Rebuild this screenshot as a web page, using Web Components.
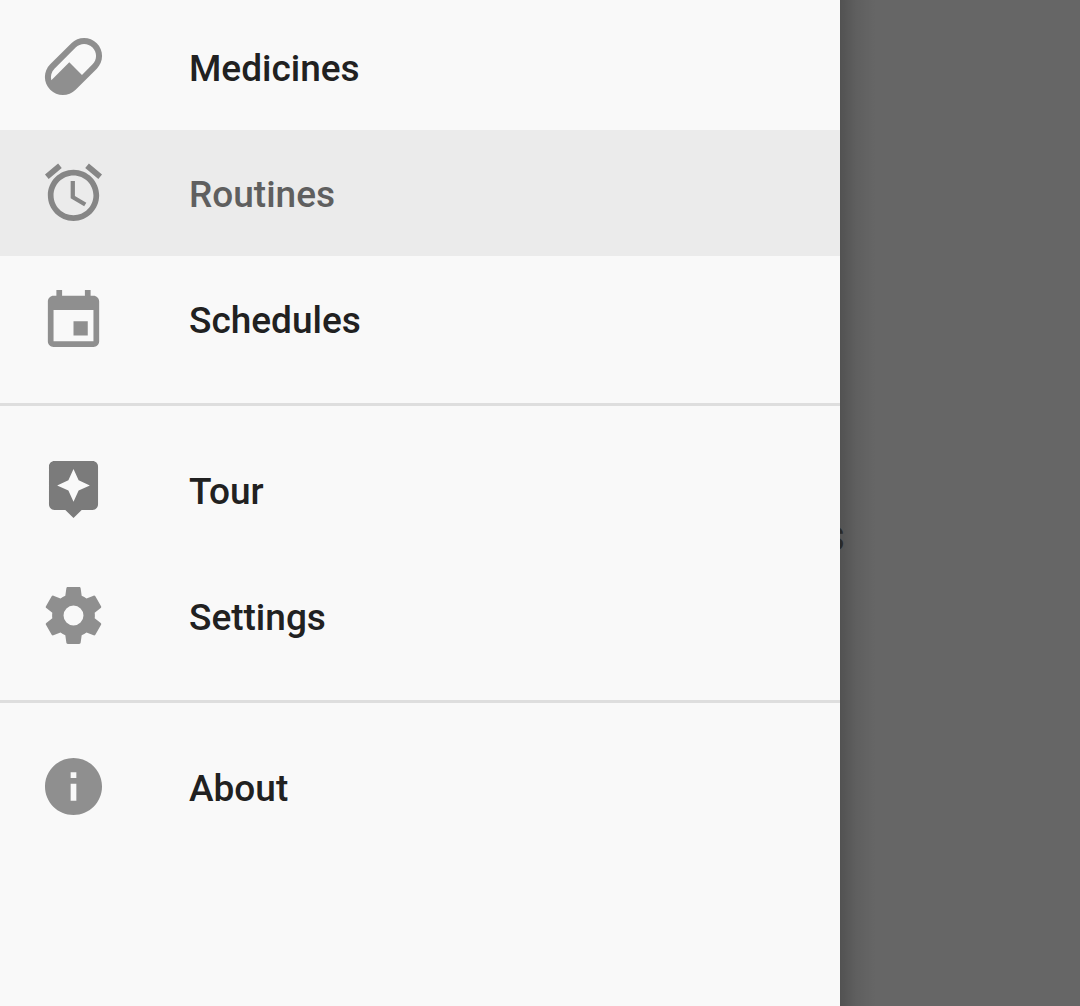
<!DOCTYPE html>
<html lang="en">
<head>
<meta charset="utf-8">
<meta name="viewport" content="width=device-width, initial-scale=1">
<title>Navigation drawer</title>
<style>
html, body { margin: 0; height: 100%; }
body { font-family: Roboto, "Liberation Sans", sans-serif; background: #666; overflow: hidden; }
</style>
</head>
<body>
<app-shell>
  <nav-drawer slot="drawer">
    <nav-group>
      <nav-item icon="pill">Medicines</nav-item>
      <nav-item icon="alarm" selected>Routines</nav-item>
      <nav-item icon="event">Schedules</nav-item>
    </nav-group>
    <nav-group>
      <nav-item icon="assistant">Tour</nav-item>
      <nav-item icon="settings">Settings</nav-item>
    </nav-group>
    <nav-group>
      <nav-item icon="info">About</nav-item>
    </nav-group>
  </nav-drawer>
  <span>s</span>
</app-shell>
<script>
const define = (name, html, setup) => customElements.define(name, class extends HTMLElement {
  constructor() {
    super();
    this.attachShadow({ mode: 'open' }).innerHTML = html;
  }
  connectedCallback() { if (setup) setup(this); }
});

const ICONS = {
  pill: '<path transform="translate(-.6 -.6) scale(1.05)" d="M4.22,11.29L11.29,4.22C13.64,1.88 17.43,1.88 19.78,4.22C22.12,6.56 22.12,10.36 19.78,12.71L12.71,19.78C10.36,22.12 6.56,22.12 4.22,19.78C1.88,17.43 1.88,13.64 4.22,11.29M5.64,12.71C4.59,13.75 4.24,15.24 4.6,16.57L10.59,10.59L14.83,14.83L18.36,11.29C19.93,9.73 19.93,7.2 18.36,5.64C16.8,4.07 14.27,4.07 12.71,5.64L5.64,12.71Z"/>',
  alarm: '<path d="M22 5.72l-4.6-3.86-1.29 1.53 4.6 3.86L22 5.72zM7.88 3.39L6.6 1.86 2 5.71l1.29 1.53 4.59-3.85zM12.5 8H11v6l4.75 2.85.75-1.23-4-2.37V8zM12 4c-4.97 0-9 4.03-9 9s4.02 9 9 9c4.97 0 9-4.03 9-9s-4.03-9-9-9zm0 16c-3.87 0-7-3.13-7-7s3.13-7 7-7 7 3.13 7 7-3.13 7-7 7z"/>',
  event: '<path transform="translate(0 1)" d="M17 12h-5v5h5v-5zM16 1v2H8V1H6v2H5c-1.11 0-1.99.9-1.99 2L3 19c0 1.1.89 2 2 2h14c1.1 0 2-.9 2-2V5c0-1.1-.9-2-2-2h-1V1h-2zm3 18H5V8h14v11z"/>',
  assistant: '<path transform="translate(.53 .05) scale(.956)" d="M19 2H5c-1.11 0-2 .9-2 2v14c0 1.1.89 2 2 2h4l3 3 3-3h4c1.1 0 2-.9 2-2V4c0-1.1-.9-2-2-2zm-5.12 10.88L12 17l-1.88-4.12L6 11l4.12-1.88L12 5l1.88 4.12L18 11l-4.12 1.88z"/>',
  settings: '<path d="M12,15.5A3.5,3.5 0 0,1 8.5,12A3.5,3.5 0 0,1 12,8.5A3.5,3.5 0 0,1 15.5,12A3.5,3.5 0 0,1 12,15.5M19.43,12.97C19.47,12.65 19.5,12.33 19.5,12C19.5,11.67 19.47,11.34 19.43,11L21.54,9.37C21.73,9.22 21.78,8.95 21.66,8.73L19.66,5.27C19.54,5.05 19.27,4.96 19.05,5.05L16.56,6.05C16.04,5.66 15.5,5.32 14.87,5.07L14.5,2.42C14.46,2.18 14.25,2 14,2H10C9.75,2 9.54,2.18 9.5,2.42L9.13,5.07C8.5,5.32 7.96,5.66 7.44,6.05L4.95,5.05C4.73,4.96 4.46,5.05 4.34,5.27L2.34,8.73C2.21,8.95 2.27,9.22 2.46,9.37L4.57,11C4.53,11.34 4.5,11.67 4.5,12C4.5,12.33 4.53,12.65 4.57,12.97L2.46,14.63C2.27,14.78 2.21,15.05 2.34,15.27L4.34,18.73C4.46,18.95 4.73,19.03 4.95,18.95L7.44,17.94C7.96,18.34 8.5,18.68 9.13,18.93L9.5,21.58C9.54,21.82 9.75,22 10,22H14C14.25,22 14.46,21.82 14.5,21.58L14.87,18.93C15.5,18.67 16.04,18.34 16.56,17.94L19.05,18.95C19.27,19.03 19.54,18.95 19.66,18.73L21.66,15.27C21.78,15.05 21.73,14.78 21.54,14.63L19.43,12.97Z"/>',
  info: '<path d="M12 2C6.48 2 2 6.48 2 12s4.48 10 10 10 10-4.48 10-10S17.52 2 12 2zm1 15h-2v-6h2v6zm0-8h-2V7h2v2z"/>'
};

define('nav-item', `
<style>
  :host { display: block; color: #212121; --icon: #8f8f8f; }
  :host([icon="assistant"]) { --icon: #7b7b7b; }
  :host([selected]) { color: #5f5f5f; background: #ebebeb; --icon: #868686; }
  button {
    display: flex; align-items: center; gap: 81px;
    box-sizing: border-box; width: 100%; height: 126px; padding: 0 39px 1px;
    border: 0; background: none; color: inherit; text-align: left;
    font: 500 37px/44px Roboto, "Liberation Sans", sans-serif; cursor: pointer;
  }
  svg { flex: none; width: 69px; height: 69px; fill: var(--icon); }
  .label { padding-top: 5px; }
</style>
<button type="button"><svg viewBox="-0.1 -0.1 24.2 24.2" aria-hidden="true"></svg><span class="label"><slot></slot></span></button>`,
  el => {
    el.shadowRoot.querySelector('svg').innerHTML = ICONS[el.getAttribute('icon')];
    if (el.hasAttribute('selected')) el.shadowRoot.querySelector('button').setAttribute('aria-current', 'page');
  });

define('nav-group', `
<style>
  :host { display: block; }
  :host(:not(:first-child)) { border-top: 3px solid #dedede; margin-top: 21px; padding-top: 21px; }
</style>
<slot></slot>`);

define('nav-drawer', `
<style>
  :host { display: block; height: 100%; }
  nav { box-sizing: border-box; height: 100%; padding-top: 4px; background: #f9f9f9; }
</style>
<nav aria-label="Main"><slot></slot></nav>`);

define('app-shell', `
<style>
  :host { display: block; position: relative; height: 100vh; overflow: hidden; background: #666; }
  main {
    display: flex; align-items: center; justify-content: flex-end; box-sizing: border-box;
    height: 100%; padding: 64px 235px 0 0; color: #333; font-size: 46px; font-weight: 500; line-height: 52px;
  }
  .drawer {
    position: absolute; inset: 0 240px 0 0;
  }
  .drawer::after {
    content: ""; position: absolute; top: 0; bottom: 0; left: 100%; width: 36px;
    background: linear-gradient(to right, rgba(0,0,0,.2), rgba(0,0,0,.07) 45%, transparent);
  }
</style>
<main><slot></slot></main>
<div class="drawer"><slot name="drawer"></slot></div>`);
</script>
</body>
</html>
